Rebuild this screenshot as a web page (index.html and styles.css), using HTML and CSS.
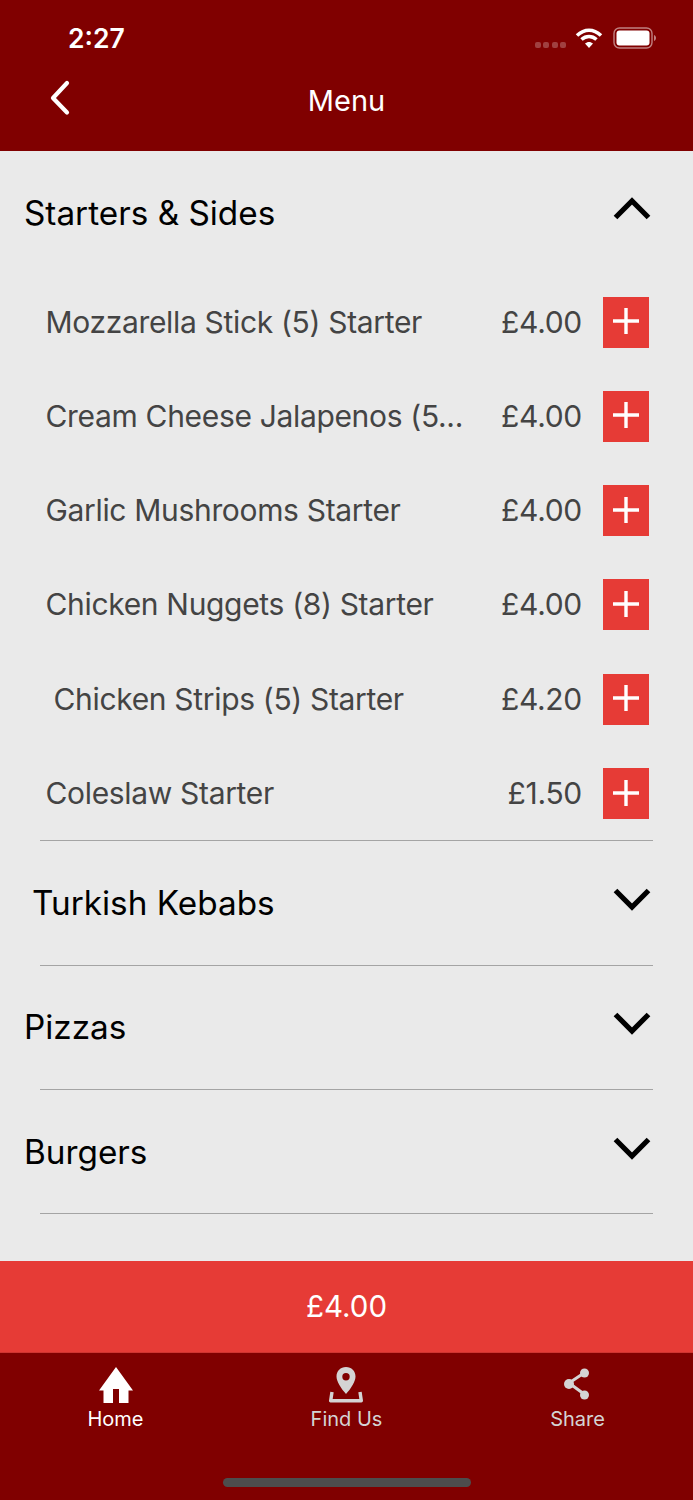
FILE: index.html
```html
<!DOCTYPE html>
<html lang="en">
<head>
<meta charset="utf-8">
<title>Menu</title>
<link rel="stylesheet" href="styles.css">
</head>
<body>
<div class="app">
  <header class="top">
    <div class="status">
      <span class="time">2:27</span>
      <div class="status-icons">
        <span class="signal"><i></i><i></i><i></i><i></i></span>
        <svg class="wifi" width="28" height="21" viewBox="0 0 28 21"><path d="M2 7.500C9.500 .5 18.500 .5 26 7.500M6.500 11.500C11 7.500 17 7.500 21.500 11.500" fill="none" stroke="#fff" stroke-width="3.600"/><path d="M10 15.500c2.400-2.100 5.600-2.100 8 0l-4 4.500z" fill="#fff"/></svg>
        <svg class="battery" width="43" height="22" viewBox="0 0 43 22"><rect x="1" y="1" width="38" height="20" rx="5.500" fill="none" stroke="#fff" stroke-opacity=".5" stroke-width="1.400"/><rect x="3.500" y="3.500" width="33" height="15" rx="3" fill="#fff"/><path d="M41 8v6c1.400-.5 2-1.700 2-3s-.6-2.500-2-3z" fill="#fff" fill-opacity=".5"/></svg>
      </div>
    </div>
    <div class="nav-bar">
      <svg class="back" width="24" height="36" viewBox="0 0 24 36"><path d="M19 3L5 18l14 14.500" fill="none" stroke="#fff" stroke-width="4.200" stroke-linecap="round" stroke-linejoin="round"/></svg>
      <h1 class="title">Menu</h1>
    </div>
  </header>

  <main class="menu">
    <section class="section open">
      <div class="section-head">
        <h2 class="section-title">Starters &amp; Sides</h2>
        <svg class="chev" width="38" height="24" viewBox="0 0 38 24"><path d="M2.500 20.500L19 4l16.500 16.500" fill="none" stroke="#000" stroke-width="5.200"/></svg>
      </div>
      <div class="row"><span class="name">Mozzarella Stick (5) Starter</span><span class="price">£4.00</span><button class="add"><svg width="28" height="28" viewBox="0 0 28 28"><path d="M14 1v26M1 14h26" stroke="#fff" stroke-width="3.400"/></svg></button></div>
      <div class="row"><span class="name">Cream Cheese Jalapenos (5...</span><span class="price">£4.00</span><button class="add"><svg width="28" height="28" viewBox="0 0 28 28"><path d="M14 1v26M1 14h26" stroke="#fff" stroke-width="3.400"/></svg></button></div>
      <div class="row"><span class="name">Garlic Mushrooms Starter</span><span class="price">£4.00</span><button class="add"><svg width="28" height="28" viewBox="0 0 28 28"><path d="M14 1v26M1 14h26" stroke="#fff" stroke-width="3.400"/></svg></button></div>
      <div class="row"><span class="name">Chicken Nuggets (8) Starter</span><span class="price">£4.00</span><button class="add"><svg width="28" height="28" viewBox="0 0 28 28"><path d="M14 1v26M1 14h26" stroke="#fff" stroke-width="3.400"/></svg></button></div>
      <div class="row"><span class="name indent">Chicken Strips (5) Starter</span><span class="price">£4.20</span><button class="add"><svg width="28" height="28" viewBox="0 0 28 28"><path d="M14 1v26M1 14h26" stroke="#fff" stroke-width="3.400"/></svg></button></div>
      <div class="row"><span class="name">Coleslaw Starter</span><span class="price">£1.50</span><button class="add"><svg width="28" height="28" viewBox="0 0 28 28"><path d="M14 1v26M1 14h26" stroke="#fff" stroke-width="3.400"/></svg></button></div>
    </section>
    <section class="section">
      <div class="section-head">
        <h2 class="section-title indent">Turkish Kebabs</h2>
        <svg class="chev" width="38" height="24" viewBox="0 0 38 24"><path d="M2.500 3.500L19 20 35.500 3.500" fill="none" stroke="#000" stroke-width="5.200"/></svg>
      </div>
    </section>
    <section class="section">
      <div class="section-head">
        <h2 class="section-title">Pizzas</h2>
        <svg class="chev" width="38" height="24" viewBox="0 0 38 24"><path d="M2.500 3.500L19 20 35.500 3.500" fill="none" stroke="#000" stroke-width="5.200"/></svg>
      </div>
    </section>
    <section class="section">
      <div class="section-head">
        <h2 class="section-title">Burgers</h2>
        <svg class="chev" width="38" height="24" viewBox="0 0 38 24"><path d="M2.500 3.500L19 20 35.500 3.500" fill="none" stroke="#000" stroke-width="5.200"/></svg>
      </div>
    </section>
  </main>

  <div class="total">£4.00</div>

  <nav class="tabs">
    <div class="tab active">
      <svg width="36" height="36" viewBox="0 0 36 36"><path d="M18 0L35 23.500h-4.500V36H21V22h-6v14H5.500V23.500H1z" fill="#fff"/></svg>
      <span>Home</span>
    </div>
    <div class="tab">
      <svg width="36" height="36" viewBox="0 0 36 36"><path fill-rule="evenodd" d="M17 0c5.500 0 9.500 4 9.500 9.500 0 5-4.500 12-9.500 17.500-5-5.500-9.500-12.500-9.500-17.500C7.500 4 11.500 0 17 0zm0 6a3.700 3.700 0 1 0 0 7.400 3.700 3.700 0 0 0 0-7.400z" fill="#d4d4d4"/><path d="M3 25l-1.300 8.800h30.600L31 25" fill="none" stroke="#d4d4d4" stroke-width="3.400" stroke-linejoin="round"/></svg>
      <span>Find Us</span>
    </div>
    <div class="tab">
      <svg width="36" height="36" viewBox="0 0 36 36"><path d="M24 6L9 16l15 11" fill="none" stroke="#d4d4d4" stroke-width="3"/><circle cx="24.500" cy="6" r="4.500" fill="#d4d4d4"/><circle cx="9" cy="17" r="5" fill="#d4d4d4"/><circle cx="24.500" cy="28" r="4.500" fill="#d4d4d4"/></svg>
      <span>Share</span>
    </div>
    <div class="home-bar"></div>
  </nav>
</div>
</body>
</html>
```
FILE: styles.css
```css
* { box-sizing: border-box; }
html, body { margin: 0; padding: 0; }
body { font-family: Inter, "Liberation Sans", sans-serif; background: #eaeaea; }
.app { width: 693px; height: 1500px; display: flex; flex-direction: column; overflow: hidden; }

.top { height: 151px; background: #800000; color: #fff; flex: none; }
.status { height: 76px; display: flex; align-items: flex-start; justify-content: space-between; padding: 21px 37px 0 68px; }
.time { font-size: 26.500px; line-height: 34px; font-weight: 600; }
.status-icons { display: flex; align-items: center; height: 34px; }
.signal { display: flex; gap: 2.500px; margin: 14px 9px 0 0; }
.signal i { width: 6px; height: 6px; border-radius: 2px; background: rgba(255,255,255,.25); }
.wifi { margin-right: 10px; }
.nav-bar { height: 50px; position: relative; display: flex; align-items: center; justify-content: center; }
.back { position: absolute; left: 48px; top: 4px; }
.title { margin: 0; font-size: 29px; font-weight: 400; line-height: 50px; }

.menu { flex: 1; }
.section-head { height: 123.400px; display: flex; align-items: center; justify-content: space-between; padding: 0 42px 0 24px; position: relative; }
.section-head svg { margin-top: -8px; }
.section-title { margin: 0; font-size: 33.300px; font-weight: 400; color: #000; line-height: 40px; }
.section-title.indent { padding-left: 8px; }
.section { position: relative; }
.section::after { content: ""; display: block; height: 1px; margin: 0 40px; background: #a4a4a4; }
.row { height: 94.300px; display: flex; align-items: center; padding: 0 44px 0 45.500px; }
.name { flex: 1; font-size: 30px; letter-spacing: -.33px; color: #444; white-space: nowrap; overflow: hidden; }
.name.indent { padding-left: 8px; }
.price { font-size: 30px; letter-spacing: -.3px; color: #444; margin-right: 21px; }
.add { width: 46px; height: 51px; margin-top: 1px; background: #e63b36; border: 0; padding: 0; display: flex; align-items: center; justify-content: center; }
.add svg { display: block; margin-top: -2px; }

.total { flex: none; height: 92px; background: #e63b36; border-bottom: 1px solid #cf3430; color: #fff; font-size: 29.500px; padding-bottom: 2px; display: flex; align-items: center; justify-content: center; }
.tabs { flex: none; height: 147px; background: #800000; display: flex; justify-content: center; padding-top: 14px; position: relative; }
.tab { width: 231px; display: flex; flex-direction: column; align-items: center; color: #d4d4d4; font-size: 20px; line-height: 26px; }
.tab svg { display: block; margin-bottom: 3px; }
.tab.active { color: #fff; }
.home-bar { position: absolute; left: 223px; top: 125px; width: 248px; height: 9px; border-radius: 5px; background: #4d4d4d; }
```
